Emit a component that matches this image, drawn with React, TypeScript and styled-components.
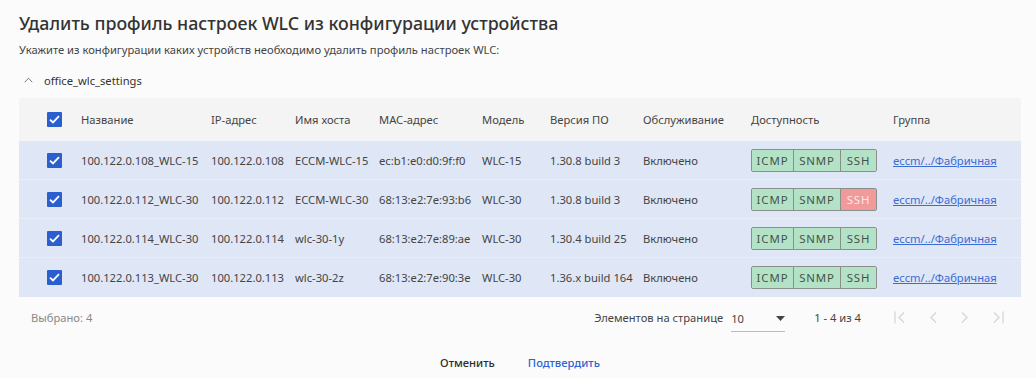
import React from "react";
import styled, { createGlobalStyle } from "styled-components";

const Global = createGlobalStyle`
  html, body { margin: 0; padding: 0; background: #fbfbfb; }
  body { font-family: "Noto Sans", "Open Sans", sans-serif; color: #333; }
`;

const Page = styled.div`
  width: 1036px;
  height: 378px;
  box-sizing: border-box;
  padding: 11px 15px 0 19px;
  display: flex;
  flex-direction: column;
  overflow: hidden;
`;

const Title = styled.h1`
  margin: 0;
  font-size: 17.8px;
  font-weight: 500;
  line-height: 25px;
  color: #333;
`;

const Subtitle = styled.p`
  margin: 6px 0 0;
  font-size: 11.2px;
  line-height: 16px;
  color: #444;
`;

const GroupHeader = styled.div`
  display: flex;
  align-items: center;
  gap: 11px;
  height: 20px;
  margin-top: 12px;
  padding-left: 5px;
  font-size: 11.2px;
  color: #333;
`;

const Table = styled.div`
  margin-top: 8px;
  display: flex;
  flex-direction: column;
`;

const COLS = "62px 130px 84px 84px 103px 68px 93px 108px 142px 1fr";

const HeadRow = styled.div`
  display: grid;
  grid-template-columns: ${COLS};
  align-items: center;
  height: 43px;
  background: #f4f4f4;
  font-size: 11.2px;
  color: #444;
`;

const BodyRow = styled.div`
  display: grid;
  grid-template-columns: ${COLS};
  align-items: center;
  height: 38px;
  background: #dfe6f5;
  border-bottom: 1px solid #e9edf6;
  font-size: 11.2px;
  color: #444;
  &:last-child { border-bottom: none; height: 39px; }
`;

const Cell = styled.div`
  white-space: nowrap;
`;

const CheckCell = styled.div`
  padding-left: 28px;
  display: flex;
  align-items: center;
`;

const Box = styled.span`
  width: 15px;
  height: 15px;
  background: #2b5fcf;
  border-radius: 1px;
  display: inline-flex;
  align-items: center;
  justify-content: center;
`;

const Access = styled.div`
  display: inline-flex;
  border: 1px solid #8a8f8c;
  border-radius: 2px;
  overflow: hidden;
  height: 21px;
`;

const Proto = styled.span<{ $bad?: boolean; $w: number }>`
  width: ${(p) => p.$w}px;
  display: flex;
  align-items: center;
  justify-content: center;
  font-size: 11.4px;
  letter-spacing: 0.9px;
  background: ${(p) => (p.$bad ? "#f09a9a" : "#b3e2c7")};
  color: ${(p) => (p.$bad ? "#fde8e8" : "#44524b")};
  & + & { border-left: 1px solid #8a8f8c; }
`;

const Link = styled.a`
  color: #3a6bd6;
  text-decoration: underline;
  font-size: 11.2px;
  cursor: pointer;
`;

const Footer = styled.div`
  display: flex;
  align-items: center;
  height: 40px;
  padding-left: 12px;
  font-size: 11.2px;
`;

const Selected = styled.span`
  color: #888;
  flex: 1;
`;

const PerPage = styled.span`
  color: #444;
  margin-right: 8px;
`;

const Select = styled.div`
  width: 54px;
  height: 26px;
  box-sizing: border-box;
  border-bottom: 1px solid #b8bcc4;
  display: flex;
  align-items: center;
  justify-content: space-between;
  color: #444;
  margin-top: 4px;
`;

const Range = styled.span`
  color: #444;
  margin-left: 29px;
  margin-right: 33px;
`;

const Pager = styled.div`
  display: flex;
  align-items: center;
  gap: 24px;
  margin-right: 17px;
`;

const PageBtn = styled.span`
  height: 14px;
  display: inline-flex;
  align-items: center;
  justify-content: center;
`;

const Actions = styled.div`
  display: flex;
  justify-content: center;
  gap: 33px;
  margin-top: 18px;
  font-size: 11.2px;
  font-weight: 500;
`;

const ActionBtn = styled.span<{ $primary?: boolean }>`
  color: ${(p) => (p.$primary ? "#2f62d3" : "#2b2b2b")};
`;

const Check = () => (
  <Box>
    <svg width="11" height="9" viewBox="0 0 11 9">
      <path d="M1 4.6 L4 7.4 L10 1.2" fill="none" stroke="#fff" strokeWidth="1.8" />
    </svg>
  </Box>
);

const rows = [
  ["100.122.0.108_WLC-15", "100.122.0.108", "ECCM-WLC-15", "ec:b1:e0:d0:9f:f0", "WLC-15", "1.30.8 build 3", false],
  ["100.122.0.112_WLC-30", "100.122.0.112", "ECCM-WLC-30", "68:13:e2:7e:93:b6", "WLC-30", "1.30.8 build 3", true],
  ["100.122.0.114_WLC-30", "100.122.0.114", "wlc-30-1y", "68:13:e2:7e:89:ae", "WLC-30", "1.30.4 build 25", false],
  ["100.122.0.113_WLC-30", "100.122.0.113", "wlc-30-2z", "68:13:e2:7e:90:3e", "WLC-30", "1.36.x build 164", false],
] as const;

const stroke = { fill: "none", stroke: "#d6d6d6", strokeWidth: 1.3 };

export default function App() {
  return (
    <>
      <Global />
      <Page>
        <Title>Удалить профиль настроек WLC из конфигурации устройства</Title>
        <Subtitle>Укажите из конфигурации каких устройств необходимо удалить профиль настроек WLC:</Subtitle>
        <GroupHeader>
          <svg width="9" height="6" viewBox="0 0 9 6">
            <path d="M0.8 5.2 L4.5 1.2 L8.2 5.2" fill="none" stroke="#777" strokeWidth="1" />
          </svg>
          <span>office_wlc_settings</span>
        </GroupHeader>
        <Table>
          <HeadRow>
            <CheckCell><Check /></CheckCell>
            <Cell>Название</Cell>
            <Cell>IP-адрес</Cell>
            <Cell>Имя хоста</Cell>
            <Cell>MAC-адрес</Cell>
            <Cell>Модель</Cell>
            <Cell>Версия ПО</Cell>
            <Cell>Обслуживание</Cell>
            <Cell>Доступность</Cell>
            <Cell>Группа</Cell>
          </HeadRow>
          {rows.map((r) => (
            <BodyRow key={r[0]}>
              <CheckCell><Check /></CheckCell>
              <Cell>{r[0]}</Cell>
              <Cell>{r[1]}</Cell>
              <Cell>{r[2]}</Cell>
              <Cell>{r[3]}</Cell>
              <Cell>{r[4]}</Cell>
              <Cell>{r[5]}</Cell>
              <Cell>Включено</Cell>
              <Cell>
                <Access>
                  <Proto $w={41}>ICMP</Proto>
                  <Proto $w={46}>SNMP</Proto>
                  <Proto $w={35} $bad={r[6]}>SSH</Proto>
                </Access>
              </Cell>
              <Cell><Link>eccm/../Фабричная</Link></Cell>
            </BodyRow>
          ))}
        </Table>
        <Footer>
          <Selected>Выбрано: 4</Selected>
          <PerPage>Элементов на странице</PerPage>
          <Select>
            <span>10</span>
            <svg width="9" height="5" viewBox="0 0 9 5">
              <path d="M0 0 L9 0 L4.5 5 Z" fill="#444" />
            </svg>
          </Select>
          <Range>1 - 4 из 4</Range>
          <Pager>
            <PageBtn>
              <svg width="12" height="13" viewBox="0 0 12 13">
                <path d="M1 0.5 V12.5" {...stroke} />
                <path d="M10 1.5 L5 6.5 L10 11.5" {...stroke} />
              </svg>
            </PageBtn>
            <PageBtn>
              <svg width="7" height="13" viewBox="0 0 7 13">
                <path d="M6 1.5 L1 6.5 L6 11.5" {...stroke} />
              </svg>
            </PageBtn>
            <PageBtn>
              <svg width="7" height="13" viewBox="0 0 7 13">
                <path d="M1 1.5 L6 6.5 L1 11.5" {...stroke} />
              </svg>
            </PageBtn>
            <PageBtn>
              <svg width="12" height="13" viewBox="0 0 12 13">
                <path d="M2 1.5 L7 6.5 L2 11.5" {...stroke} />
                <path d="M11 0.5 V12.5" {...stroke} />
              </svg>
            </PageBtn>
          </Pager>
        </Footer>
        <Actions>
          <ActionBtn>Отменить</ActionBtn>
          <ActionBtn $primary>Подтвердить</ActionBtn>
        </Actions>
      </Page>
    </>
  );
}
